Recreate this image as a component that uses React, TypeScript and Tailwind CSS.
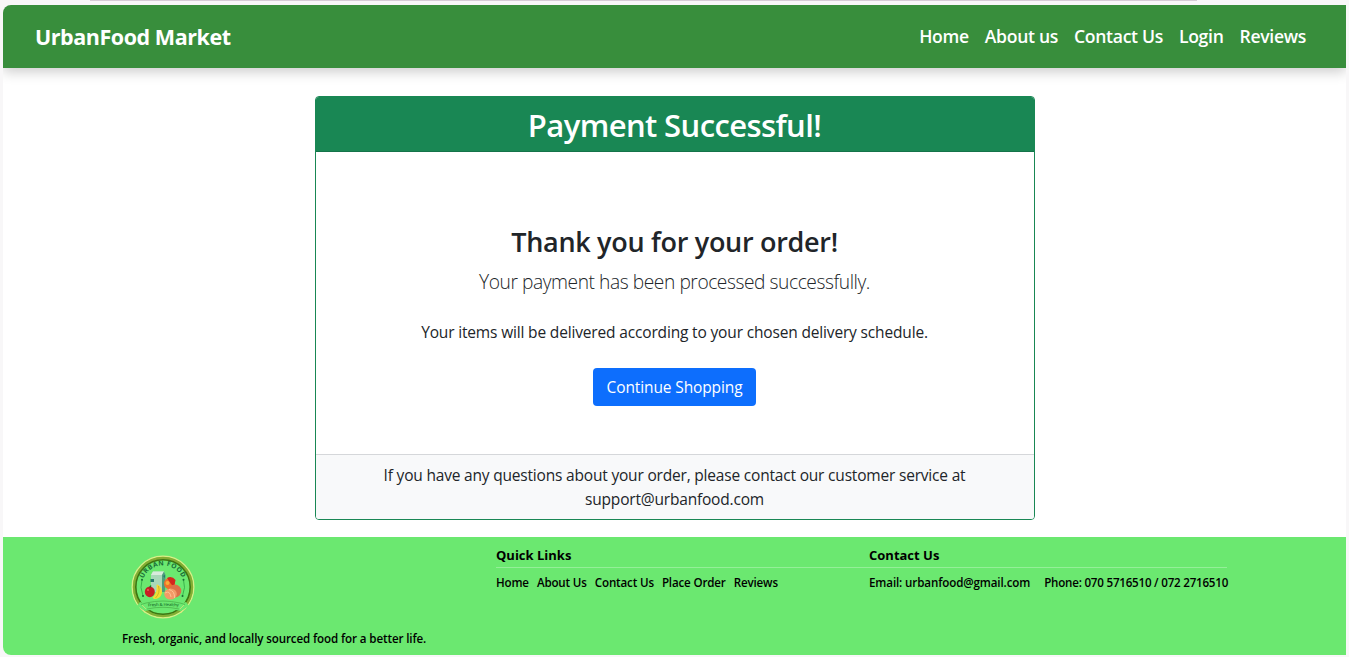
import React from "react";

const navLinks = ["Home", "About us", "Contact Us", "Login", "Reviews"];
const quickLinks = ["Home", "About Us", "Contact Us", "Place Order", "Reviews"];

function Logo() {
  return (
    <svg width="64" height="64" viewBox="0 0 64 64" className="block">
      <defs>
        <path id="arcTop" d="M12.5 23.6 A 21 21 0 0 1 51.5 23.6" />
        <path id="arcBottom" d="M15 51.5 Q 32 50.5 50 51.5" />
      </defs>
      <circle cx="32" cy="32" r="30.8" fill="none" stroke="#d9ef86" strokeWidth="1.4" />
      <circle cx="32" cy="32" r="29" fill="none" stroke="#85ac32" strokeWidth="2.4" />
      <circle cx="32" cy="32" r="27.2" fill="none" stroke="#3e7410" strokeWidth="1.6" />
      <path d="M9 47 L15 49 Q32 43 49 49 L55 47 L58 51 L50 56 Q32 51 14 56 L6 51 Z" fill="#6be870" />
      <path d="M10 49.5 L15 48 Q32 44 49 48 L54 49.5 M16 54 Q32 50.5 48 54" fill="none" stroke="#48ad46" strokeWidth="0.7" />
      <path d="M9 53 L14 58 M55 53 L50 58 M11 50 L15 54 M53 50 L49 54" stroke="#c4e47a" strokeWidth="0.9" />
      <text fill="#176b35" fontSize="6.6" fontWeight="700" fontFamily="Open Sans, sans-serif">
        <textPath href="#arcTop" startOffset="0" textLength="49" lengthAdjust="spacing">URBAN FOOD</textPath>
      </text>
      <text fill="#247e33" fontSize="4.3" fontWeight="600" fontFamily="Open Sans, sans-serif">
        <textPath href="#arcBottom" startOffset="2" textLength="31" lengthAdjust="spacing">Fresh &amp; Healthy</textPath>
      </text>
      <path d="M11 25 Q8.5 32 12 41 M52.5 25 Q55 32 51.5 41" fill="none" stroke="#249e3c" strokeWidth="0.7" />
      <g fill="#176b35">
        <circle cx="11" cy="24.7" r="1" />
        <circle cx="12" cy="41" r="1" />
        <circle cx="52.5" cy="24.7" r="1" />
        <circle cx="51.5" cy="41" r="1" />
      </g>
      <path d="M20 20 L22 16.5 L33 16.5 L34 20 L34 37 L20 37 Z" fill="#a8d8b8" />
      <path d="M20 20 L22 16.5 L33 16.5 L31 20 Z" fill="#d8eadc" />
      <path d="M31 20 L33 16.5 L34.5 20 L34 37 L31 37 Z" fill="#4c9c7c" />
      <path d="M19.5 24 h3.5 v3 h-3.5 Z M32 21 l2 -1 v3 Z" fill="#22796b" />
      <ellipse cx="38.5" cy="28.5" rx="5.5" ry="5.7" fill="#ef702b" />
      <path d="M36 23 Q41 20.5 44.5 25 L43 32 L40 29 Z" fill="#d3271d" />
      <circle cx="36.5" cy="28" r="2" fill="#f8ad38" />
      <ellipse cx="18.8" cy="36.8" rx="5" ry="5.4" fill="#c91c24" />
      <path d="M18.5 33 Q18 31 20 30 Q21 32 18.5 33" fill="#176b25" />
      <circle cx="17" cy="35" r="0.9" fill="#f36559" />
      <ellipse cx="44" cy="36" rx="6.3" ry="6.5" fill="#dc7048" />
      <ellipse cx="39.5" cy="39" rx="6.3" ry="5.6" fill="#f39a67" />
      <path d="M34 38 Q39 35 40 42 M38 34.5 Q44 36 43.5 43" fill="none" stroke="#ffc293" strokeWidth="1" />
      <path d="M26.5 29.5 Q31.5 32 31 38 Q29.5 44 23 44 L21.5 42.5 Q26.5 38 25.5 30 Z" fill="#f4da35" />
      <path d="M27.5 31 Q29.5 38 24.5 43" fill="none" stroke="#b59b18" strokeWidth="0.6" />
    </svg>
  );
}

export default function App() {
  return (
    <div className="h-[657px] w-full overflow-hidden bg-[#f8f7f8] font-['Open_Sans','Noto_Sans',sans-serif] text-[#212529]">
      <div className="flex h-[5px] items-start pl-[90px]">
        <div className="h-px w-[1107px] bg-[#d6ccd6]" />
      </div>
      <div className="ml-[3px] flex h-[650px] w-[1343px] flex-col overflow-hidden rounded-l-lg bg-white">
        <nav className="flex h-[63px] shrink-0 items-center justify-between bg-[#388e3c] pl-8 pr-10 text-white shadow-[0_4px_12px_rgba(0,0,0,0.2)]">
          <span className="pt-px text-[21.5px] font-bold whitespace-nowrap tracking-[-0.45px]">UrbanFood Market</span>
          <ul className="flex gap-4 text-[17.6px] font-semibold whitespace-nowrap tracking-[-0.32px]">
            {navLinks.map((label) => (
              <li key={label}>{label}</li>
            ))}
          </ul>
        </nav>

        <main className="flex flex-1 flex-col items-center pt-7">
          <section className="flex h-[424px] w-[720px] flex-col overflow-hidden rounded border border-[#198754] text-center">
            <header className="flex h-[55px] items-center justify-center border-b border-[#14734a] bg-[#198754] pt-0.5 text-white">
              <h1 className="text-[31px] font-semibold leading-[38px] tracking-[-0.6px]">Payment Successful!</h1>
            </header>
            <div className="flex flex-1 flex-col items-center pt-[73px]">
              <h2 className="text-[27px] font-semibold leading-[34px] tracking-[-0.3px]">Thank you for your order!</h2>
              <p className="mt-2 text-[19.2px] font-light leading-[30px] tracking-[-0.44px]">Your payment has been processed successfully.</p>
              <p className="mt-[23px] text-[15.5px] leading-6 tracking-[-0.16px]">Your items will be delivered according to your chosen delivery schedule.</p>
              <button className="mt-6 h-[38px] w-[163px] rounded bg-[#0d6efd] text-[15.5px] leading-6 tracking-[-0.12px] text-white">
                Continue Shopping
              </button>
            </div>
            <footer className="h-[65px] border-t border-[#d5d7da] bg-[#f8f9fa] pt-2 text-[15.5px] leading-6 tracking-[-0.19px]">
              <p>If you have any questions about your order, please contact our customer service at</p>
              <p>support@urbanfood.com</p>
            </footer>
          </section>
        </main>

        <footer className="flex h-[118px] shrink-0 bg-[#6be870] pl-[119px] text-[11.6px] font-semibold whitespace-nowrap text-black">
          <div className="w-[374px] pt-[18px]">
            <div className="pl-[9px]">
              <Logo />
            </div>
            <p className="mt-[11px] leading-[18px] tracking-[-0.12px]">Fresh, organic, and locally sourced food for a better life.</p>
          </div>
          <div className="w-[373px] pt-[9px]">
            <h3 className="border-b border-[#94ef98] pb-[2px] text-[13px] leading-[19px] font-bold">Quick Links</h3>
            <ul className="mt-[6px] flex gap-2 leading-[18px] tracking-[-0.16px]">
              {quickLinks.map((label) => (
                <li key={label}>{label}</li>
              ))}
            </ul>
          </div>
          <div className="w-[358px] pt-[9px]">
            <h3 className="border-b border-[#94ef98] pb-[2px] text-[13px] leading-[19px] font-bold">Contact Us</h3>
            <div className="mt-[6px] flex gap-[14px] leading-[18px]">
              <span className="tracking-[-0.12px]">Email: urbanfood@gmail.com</span>
              <span className="tracking-[-0.22px]">Phone: 070 5716510 / 072 2716510</span>
            </div>
          </div>
        </footer>
      </div>
    </div>
  );
}
